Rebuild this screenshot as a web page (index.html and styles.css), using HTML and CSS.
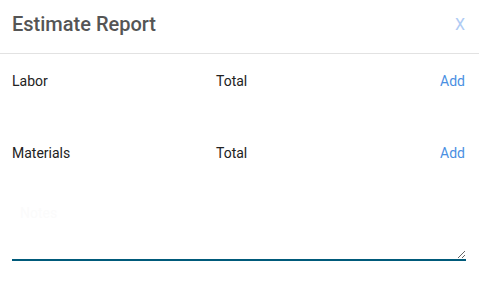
FILE: index.html
```html
<!DOCTYPE html>
<html>
<head>
<meta charset="utf-8">
<link rel="stylesheet" href="styles.css">
</head>
<body>
<div class="modal">
  <div class="header">
    <h1 class="title">Estimate Report</h1>
    <span class="close">X</span>
  </div>
  <div class="body">
    <div class="row">
      <span class="label">Labor</span>
      <span class="total">Total</span>
      <a class="add">Add</a>
    </div>
    <div class="row">
      <span class="label">Materials</span>
      <span class="total">Total</span>
      <a class="add">Add</a>
    </div>
    <textarea class="notes" placeholder="Notes"></textarea>
  </div>
</div>
</body>
</html>
```
FILE: styles.css
```css
html, body {
  margin: 0;
  padding: 0;
  background: #fff;
}
body {
  font-family: Roboto, "Liberation Sans", sans-serif;
  color: #222;
}
.header {
  display: flex;
  align-items: flex-start;
  justify-content: space-between;
  padding: 12px 14px 16px 12px;
  border-bottom: 1px solid #e2e2e2;
}
.title {
  margin: 0;
  font-size: 20px;
  line-height: 24px;
  font-weight: 500;
  color: #555;
}
.close {
  font-size: 16px;
  line-height: 24px;
  color: #afcbf4;
  padding-top: 1px;
}
.body {
  padding: 17px 13px 0 12px;
  display: flex;
  flex-direction: column;
}
.row {
  display: grid;
  grid-template-columns: 204px 1fr auto;
  font-size: 14px;
  line-height: 20px;
  height: 72px;
}
.add {
  color: #4a8fe2;
  padding-right: 1px;
}
.notes {
  margin-top: -18px;
  height: 64px;
  box-sizing: border-box;
  border: none;
  border-bottom: 2px solid #005a7a;
  padding: 8px;
  font-family: Roboto, "Liberation Sans", sans-serif;
  font-size: 14px;
  outline: none;
}
.notes::placeholder {
  color: #fbfbfb;
}
```
